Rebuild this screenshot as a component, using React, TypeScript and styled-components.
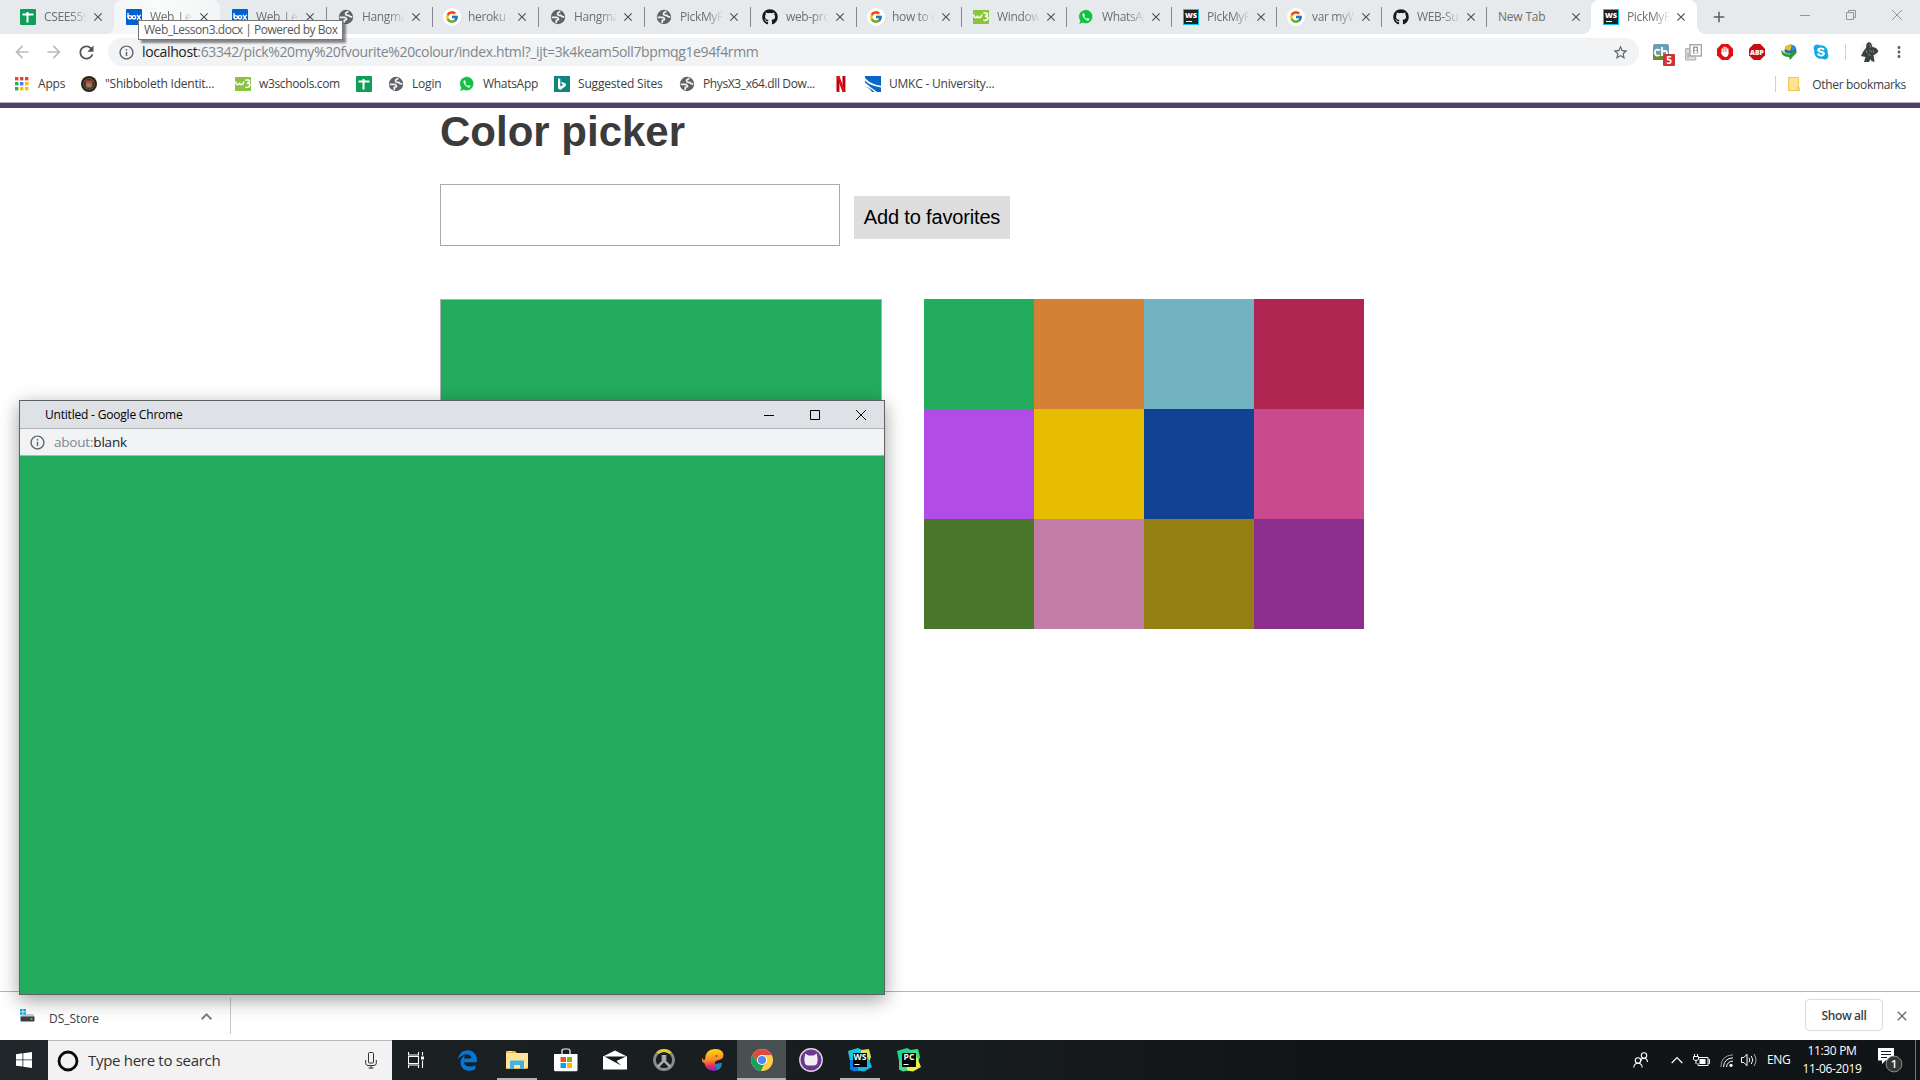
import React from "react";
import styled, { createGlobalStyle, css } from "styled-components";
import {
  MdStarBorder, MdRefresh, MdArrowBack, MdArrowForward, MdMoreVert, MdInfoOutline, MdClose, MdAdd,
} from "react-icons/md";
import { FaGithub, FaSkype, FaEdgeLegacy } from "react-icons/fa6";
import { FcGoogle } from "react-icons/fc";

const GREEN = "#24ac5e";

const Global = createGlobalStyle`
  * { box-sizing: border-box; }
  body { margin: 0; background: #fff; overflow: hidden; }
  svg { display: block; flex: none; }
`;

const Desktop = styled.div`
  position: relative;
  display: flex;
  flex-direction: column;
  width: 1920px;
  height: 1080px;
  overflow: hidden;
  background: #fff;
  font-family: "Open Sans", "Segoe UI", sans-serif;
  font-size: 12px;
  color: #3c4043;
`;

/* ---------- tab strip ---------- */
const TabStrip = styled.div`
  display: flex;
  height: 34px;
  padding-left: 8px;
  background: #e7eaed;
`;
const Tab = styled.div<{ $w: number; $state?: "active" | "hover"; $line?: boolean }>`
  position: relative;
  display: flex;
  align-items: center;
  width: ${(p) => p.$w}px;
  height: 34px;
  padding-left: 12px;
  color: #6b6f73;
  border-radius: 8px 8px 0 0;
  ${(p) => p.$state === "active" && css`background: #fff;`}
  ${(p) => p.$state === "hover" && css`background: linear-gradient(90deg, #f4f5f6, #fafbfb 40%, #f4f5f6);`}
  ${(p) => p.$state && css`
    &::before, &::after {
      content: "";
      position: absolute;
      bottom: 0;
      width: 8px;
      height: 8px;
    }
    &::before { left: -8px; background: radial-gradient(circle at 0 0, transparent 7.5px, ${p.$state === "active" ? "#fff" : "#f4f5f6"} 8px); }
    &::after { right: -8px; background: radial-gradient(circle at 100% 0, transparent 7.5px, ${p.$state === "active" ? "#fff" : "#f4f5f6"} 8px); }
  `}
  ${(p) => p.$line && css`
    &::before {
      content: "";
      position: absolute;
      left: 0;
      top: 7px;
      width: 1px;
      height: 20px;
      background: #85888c;
    }
  `}
`;
const TabTitle = styled.span<{ $plain?: boolean }>`
  flex: none;
  width: ${(p) => (p.$plain ? 66 : 42)}px;
  margin-left: ${(p) => (p.$plain ? 0 : 8)}px;
  overflow: hidden;
  white-space: nowrap;
  letter-spacing: ${(p) => (p.$plain ? -0.2 : -0.35)}px;
  line-height: 20px;
  ${(p) => !p.$plain && css`mask-image: linear-gradient(90deg, #000 62%, transparent 104%);`}
`;
const TabClose = styled.span`
  margin-left: 5px;
  color: #4d5155;
`;
const NewTab = styled.span`
  display: flex;
  align-items: center;
  margin-left: 13px;
  color: #5a5d61;
`;
const WindowButtons = styled.div`
  display: flex;
  align-items: center;
  gap: 36px;
  height: 29px;
  margin-left: auto;
  padding-right: 18px;
`;

/* ---------- toolbar ---------- */
const Toolbar = styled.div`
  display: flex;
  align-items: center;
  height: 36px;
  padding: 0 12px;
  color: #5f6368;
`;
const NavButton = styled.span<{ $dim?: boolean }>`
  width: 32px;
  color: ${(p) => (p.$dim ? "#babcbe" : "#505458")};
`;
const Omnibox = styled.div`
  display: flex;
  align-items: center;
  width: 1531px;
  height: 28px;
  padding: 0 10px;
  border-radius: 14px;
  background: #f1f3f4;
`;
const Url = styled.span`
  flex: 1;
  margin-left: 7px;
  font-size: 14px;
  letter-spacing: -0.37px;
  line-height: 20px;
  color: #80868b;
  b { font-weight: 400; color: #202124; }
`;
const Extensions = styled.div`
  display: flex;
  align-items: center;
  gap: 16px;
  margin-left: 14px;
`;
const ExtensionSlot = styled.div`
  position: relative;
  width: 16px;
  height: 16px;
`;
const Badge = styled.span`
  position: absolute;
  left: 10px;
  top: 10px;
  width: 12px;
  height: 12px;
  border-radius: 1px;
  background: #cf3434;
  color: #fff;
  font-size: 10px;
  font-weight: 700;
  line-height: 12px;
  text-align: center;
`;
const Rule = styled.span<{ $h: number }>`
  width: 1px;
  height: ${(p) => p.$h}px;
  background: #cfd1d3;
`;
const Profile = styled.span`
  margin-left: 13px;
`;
const MenuDots = styled.span`
  margin-left: auto;
`;

/* ---------- bookmarks ---------- */
const Bookmarks = styled.div`
  display: flex;
  align-items: center;
  height: 33px;
  padding: 0 14px 4px 15px;
  border-bottom: 1px solid #b4b4b6;
`;
const Bookmark = styled.div<{ $w?: number; $ls?: number; $gap?: number }>`
  display: flex;
  align-items: center;
  gap: ${(p) => p.$gap ?? 8}px;
  width: ${(p) => (p.$w ? p.$w + "px" : "auto")};
  white-space: nowrap;
  letter-spacing: ${(p) => p.$ls ?? -0.18}px;
  line-height: 20px;
`;
const OtherBookmarks = styled.div`
  display: flex;
  align-items: center;
  gap: 12px;
  margin-left: auto;
  letter-spacing: -0.32px;
  white-space: nowrap;
`;

/* ---------- web page ---------- */
const Page = styled.main`
  flex: 1;
  padding: 0 0 0 440px;
  border-top: 5px solid #4e4066;
  font-family: "Liberation Sans", Arial, sans-serif;
`;
const Title = styled.h1`
  margin: 0;
  font-size: 42px;
  line-height: 48px;
  color: #3b3b3b;
`;
const Form = styled.div`
  display: flex;
  align-items: center;
  gap: 14px;
  margin-top: 28px;
`;
const ColorInput = styled.div`
  width: 400px;
  height: 62px;
  border: 1px solid #a9a9a9;
`;
const AddButton = styled.button`
  width: 156px;
  height: 43px;
  margin: 5px 0 0;
  padding: 0;
  border: 0;
  background: #ddd;
  color: #000;
  font: 20px "Liberation Sans", Arial, sans-serif;
  letter-spacing: -0.16px;
`;
const Boards = styled.div`
  display: flex;
  gap: 42px;
  margin-top: 53px;
`;
const Preview = styled.div`
  width: 442px;
  height: 330px;
  border: 1px solid #b0b0b0;
  background: ${GREEN};
`;
const Palette = styled.div`
  display: grid;
  grid-template-columns: repeat(4, 110px);
  grid-auto-rows: 110px;
`;
const Swatch = styled.div<{ $c: string }>`
  background: ${(p) => p.$c};
`;

/* ---------- download shelf ---------- */
const Shelf = styled.div`
  display: flex;
  align-items: center;
  height: 49px;
  padding: 0 10px 0 19px;
  border-top: 1px solid #b4b4b6;
  background: #fff;
`;
const Download = styled.div`
  display: flex;
  align-items: center;
  width: 212px;
  height: 36px;
  padding-right: 18px;
  border-right: 1px solid #c6c8ca;
  span { flex: 1; margin-left: 14px; padding-top: 4px; letter-spacing: -0.05px; }
`;
const ShowAll = styled.button`
  width: 78px;
  height: 32px;
  margin: 0 11px 2px auto;
  padding: 0;
  border: 1px solid #dadce0;
  border-radius: 4px;
  background: #fff;
  color: #3c4043;
  font: 600 12px "Open Sans", sans-serif;
  letter-spacing: -0.4px;
`;
const ShelfClose = styled.span`
  margin-bottom: 1px;
  color: #6b6e71;
`;

/* ---------- taskbar ---------- */
const Taskbar = styled.div`
  display: flex;
  height: 40px;
  background: linear-gradient(90deg, #20262a 0, #1a1f22 25%, #171c1f 50%, #111416 70%, #111518 100%);
  color: #fff;
`;
const Start = styled.div`
  display: flex;
  align-items: center;
  justify-content: center;
  width: 48px;
`;
const Search = styled.div`
  display: flex;
  align-items: center;
  width: 344px;
  padding: 0 15px 0 9px;
  border-top: 1px solid #b8b8b8;
  background: #f2f2f2;
  color: #303030;
  font-size: 15px;
  span { flex: 1; margin-left: 9px; padding-bottom: 1px; letter-spacing: -0.3px; }
`;
const TaskView = styled.div`
  display: flex;
  align-items: center;
  justify-content: center;
  width: 51px;
  padding-right: 3px;
`;
const TaskButton = styled.div<{ $on?: boolean; $run?: boolean }>`
  display: flex;
  align-items: center;
  justify-content: center;
  width: 49px;
  height: 40px;
  ${(p) => p.$on && css`background-color: #4a4f52;`}
  ${(p) => p.$run && css`
    background-image: linear-gradient(#b5b1b5, #b5b1b5);
    background-repeat: no-repeat;
    background-position: center bottom;
    background-size: ${p.$on ? 49 : 40}px 2px;
  `}
`;
const Tray = styled.div`
  display: flex;
  align-items: center;
  width: 287px;
  margin-left: auto;
`;
const TrayIcon = styled.span<{ $gap: number }>`
  margin-left: ${(p) => p.$gap}px;
`;
const Lang = styled.span`
  width: 26px;
  margin-left: 9px;
  padding-bottom: 1px;
  letter-spacing: -0.4px;
`;
const Clock = styled.div`
  width: 62px;
  margin-left: 8px;
  text-align: center;
  line-height: 18px;
  letter-spacing: -0.35px;
  white-space: nowrap;
`;
const PeekEdge = styled.span`
  width: 1px;
  height: 40px;
  margin: 0 4px 0 auto;
  background: #777a7c;
`;

/* ---------- floating pieces ---------- */
const Tooltip = styled.div`
  position: absolute;
  left: 138px;
  top: 20px;
  width: 205px;
  height: 20px;
  padding-left: 5px;
  border: 1px solid #767676;
  background: #fff;
  box-shadow: 3px 3px 2px rgba(0, 0, 0, 0.45);
  color: #575757;
  line-height: 18px;
  letter-spacing: -0.47px;
  white-space: nowrap;
`;
const Popup = styled.section`
  position: absolute;
  left: 19px;
  top: 400px;
  display: flex;
  flex-direction: column;
  width: 866px;
  height: 595px;
  border: 1px solid #5e6263;
  background: ${GREEN};
  box-shadow: 0 5px 18px rgba(0, 0, 0, 0.38);
`;
const PopupTitle = styled.div`
  display: flex;
  align-items: center;
  height: 28px;
  padding: 0 18px 0 25px;
  border-bottom: 1px solid #b0b3b6;
  background: #dee1e6;
  color: #000;
  letter-spacing: -0.2px;
`;
const PopupButtons = styled.div`
  display: flex;
  gap: 36px;
  margin-left: auto;
`;
const PopupAddress = styled.div`
  display: flex;
  align-items: center;
  gap: 8px;
  height: 27px;
  padding-left: 9px;
  border-bottom: 1px solid #b0b3b6;
  background: #f1f3f4;
  color: #80868b;
  font-size: 13.5px;
  letter-spacing: -0.2px;
  b { font-weight: 400; color: #202124; }
  svg { color: #5f6368; }
`;

/* ---------- icons ---------- */
const GlobeIcon = () => (
  <svg width="16" height="16" viewBox="0 0 16 16"><circle cx="8" cy="8" r="7.200" fill="#5f6368" /><g fill="none" stroke="#f1f2f3" strokeWidth="1.700"><path d="M10.300 2.300 7.700 4.100q-.7 1.900 1.400 2.200h1.700q.8 1.900 3.500 1.500" /><path d="M1.700 8.400h4.500q2.400.1 2.300 2.200l-2.200.7v2.700" /></g></svg>
);
const SheetIcon = () => (
  <svg width="16" height="16" viewBox="0 0 16 16"><rect width="16" height="16" rx="1" fill="#0f9d58" /><path d="M2.500 5.500h11M7.500 3v10.500" stroke="#fff" strokeWidth="2" /></svg>
);
const BoxIcon = () => (
  <svg width="16" height="16" viewBox="0 0 16 16"><rect width="16" height="16" rx="1" fill="#0061d5" /><g fill="none" stroke="#fff" strokeWidth="1.4"><path d="M2 4.500v4M11.300 6.300l3 4M14.300 6.300l-3 4" strokeLinecap="round" /><circle cx="3.800" cy="8.300" r="1.700" /><circle cx="8" cy="8.300" r="1.700" /></g></svg>
);
const W3Icon = () => (
  <svg width="16" height="16" viewBox="0 0 16 16"><rect y="1" width="16" height="14" fill="#8ac43f" /><path d="M.8 5.500c0 4 3.300 4 3.700 1 .3 3 3.800 3 4.300-1M10.300 4.200q4-.9 4.200 1 0 1.800-2.500 2 3.300.2 2.800 2.600-.8 2.300-4.500 1.300" fill="none" stroke="#fff" strokeWidth="1.500" /></svg>
);
const RoundBack = styled.span`
  display: flex;
  align-items: center;
  justify-content: center;
  width: 16px;
  height: 16px;
  border-radius: 50%;
  background: #fff;
  box-shadow: 0 0 0 1px #fff;
`;
const GoogleIcon = () => <RoundBack><FcGoogle size={14} /></RoundBack>;
const WhatsIcon = () => (
  <svg width="16" height="16" viewBox="0 0 16 16"><path d="M.8 15.300 2 11.700A7 7 0 1 1 4.800 14Z" fill="#12c143" stroke="#fff" strokeWidth=".5" /><path d="M5 4.200q-1.300 1.300 0 3.500 1.700 3 4.600 4 1.400.1 2-1.600L9.700 9l-.9 1Q7 9.300 6.200 7.500l.7-1-.8-2Z" fill="#fff" /></svg>
);
const WsGlyph = () => (
  <svg width="16" height="16" viewBox="0 0 16 16"><rect width="16" height="16" fill="#07c3f2" /><rect x="1" y="1" width="14" height="14" fill="#222" /><text x="8" y="8.600" textAnchor="middle" fontFamily="Open Sans, sans-serif" fontWeight="800" fontSize="7.500" fill="#fff">WS</text><path d="M3 12.500h6" stroke="#fff" /></svg>
);
const AppsIcon = () => {
  const colors = ["#e94235", "#e94235", "#e94235", "#34a853", "#4285f4", "#fbbc05", "#34a853", "#fbbc05", "#fbbc05"];
  return (
    <svg width="14" height="14" viewBox="0 0 14 14">
      {colors.map((c, i) => <rect key={i} x={(i % 3) * 5} y={Math.floor(i / 3) * 5} width="3.400" height="3.400" fill={c} />)}
    </svg>
  );
};
const ShieldCrest = () => (
  <svg width="16" height="16" viewBox="0 0 16 16"><circle cx="8" cy="8" r="8" fill="#2a2119" /><circle cx="8" cy="8" r="6" fill="#6a5638" /><circle cx="8" cy="8" r="5" fill="#3b3021" /><path d="M4 4.500h8l-1 2.500H5Z" fill="#b8443c" /><path d="M4.500 8h7l-1 3.500h-5Z" fill="#8e7f66" /><path d="M5 7.500h6" stroke="#6178a0" /></svg>
);
const BingIcon = () => (
  <svg width="16" height="16" viewBox="0 0 16 16"><rect width="16" height="16" fill="#10857f" /><path d="m4 2 2.300.9v7.500l3-1.700-1.500-.7-1-2.300 5 1.800v2.600L6.300 14 4 12.600Z" fill="#fff" /></svg>
);
const NetflixIcon = () => (
  <svg width="16" height="16" viewBox="0 0 16 16"><path d="M3.500 0H6.400V16L3.500 15.700ZM9.500 0h2.900v16l-2.900-.3Z" fill="#b1060f" /><path d="M3.500 0h2.900l6 16H9.500Z" fill="#e50914" /></svg>
);
const UmkcIcon = () => (
  <svg width="16" height="16" viewBox="0 0 16 16"><rect width="16" height="16" fill="#0766c8" /><path d="M0 2q5 6 16 7.800v1.600Q4 9.500 0 4.500ZM0 6.500Q5 11 12 16H9.500Q6 12 0 10.500Z" fill="#fff" /><path d="M0 10.500Q5 12 7 16H0Z" fill="#fff" /></svg>
);
const CbIcon = () => (
  <svg width="16" height="16" viewBox="0 0 16 16"><rect width="16" height="16" rx="2" fill="#6b9fb0" /><path d="M0 11q8-3 16 0v5H0Z" fill="#688b36" /><path d="M7 6.300Q2 4 2 8.500T7 11M9 3v9M9 7.500q5-2 5 1.500T9 11" fill="none" stroke="#fff" strokeWidth="1.800" /></svg>
);
const CardsIcon = () => (
  <svg width="17" height="17" viewBox="0 0 17 17"><path d="M4 4.500H.7V16h10v-3" fill="#ddd" stroke="#aaa" /><rect x="5" y=".7" width="11.300" height="11.300" fill="#fff" stroke="#999" strokeWidth="1.200" /><path d="M8 2.500h5v7H8z" fill="#9b9b9b" /><circle cx="10.600" cy="5" r="1.200" fill="#fff" /><path d="M9 9q0-2.500 1.600-2.500T12.200 9Z" fill="#fff" /><path d="M3 14V9" stroke="#999" /></svg>
);
const StopHand = () => (
  <svg width="16" height="16" viewBox="0 0 16 16"><path d="M4.700 0h6.600L16 4.700v6.600L11.300 16H4.700L0 11.300V4.700Z" fill="#e40d0d" /><path d="M5.200 9V5M7.100 8V3.200M9 8V3.500M10.800 9V5" stroke="#fff" strokeWidth="1.400" strokeLinecap="round" /><path d="M4.500 8h7v2q-.5 3-3.200 3.200Q6 13 4.500 10Z" fill="#fff" /></svg>
);
const AbpIcon = () => (
  <svg width="16" height="16" viewBox="0 0 16 16"><path d="M4.700 0h6.600L16 4.700v6.600L11.300 16H4.700L0 11.300V4.700Z" fill="#c70d12" /><text x="8" y="10.500" textAnchor="middle" fontFamily="Open Sans, sans-serif" fontWeight="800" fontSize="6.800" fill="#fff">ABP</text></svg>
);
const IdmIcon = () => (
  <svg width="17" height="16" viewBox="0 0 17 16"><circle cx="9.500" cy="6.500" r="6" fill="#276bb9" /><path d="M3.500 5q2-5 8-4.300L9 7Z" fill="#efbf28" /><path d="M10 1q4 0 5 4l-4 2Z" fill="#2f8be0" /><path d="M.5 5.500q2 5 8 5l3-3.500 4.500 1-7 8-1-3Q2 13 .5 9Z" fill="#279a30" /><path d="M2 6.500q3 4 7.500 3.500" fill="none" stroke="#9fe05d" strokeWidth="1.200" /></svg>
);
const SkypeIcon = () => (
  <svg width="16" height="16" viewBox="0 0 16 16"><circle cx="8" cy="8" r="5" fill="#fff" /><svg x="-.5" y="-.5" width="17" height="17" viewBox="0 0 17 17"><FaSkype size={17} color="#14a7e8" /></svg></svg>
);
const Soldier = () => (
  <svg width="20" height="20" viewBox="0 0 20 20"><circle cx="10" cy="10" r="9.500" fill="#f5f6f6" /><path d="m9.500 0 2.500 1 1.500 4 3.500 1 2.500 3-2.500 3-2.500 1 1 7-3-1-1-2-1.500 3H5l1.500-5L2 14l2.500-5L7 6 7.500 2Z" fill="#3a403b" /><path d="m10 2 2 2-1 2M10 8l3 2M9 12l3 2M7 8l1 3M14 8l1 3" fill="none" stroke="#7c8279" /></svg>
);
const FolderNote = () => (
  <svg width="12" height="14" viewBox="0 0 12 14"><path d="M.5.5h10v9l1 1v3H.5Z" fill="#ffe591" stroke="#ecc94f" /><path d="M9.500 13V9.500" stroke="#ecc94f" /></svg>
);
const DriveIcon = () => (
  <svg width="16" height="14" viewBox="0 0 16 14"><path d="M1 0h2.600v2.600H1ZM4.300 0h2.600v2.600H4.300ZM1 3.300h2.600v2.500H1ZM4.300 3.300h2.600v2.500H4.300Z" fill="#0ba7e4" /><path d="M7 5h7l2 3H1l1-2h5Z" fill="#c7cbd0" /><rect x="1.500" y="7.500" width="14" height="5" rx="1" fill="#3a3f42" /><circle cx="12.500" cy="10" r="1" fill="#45e04b" /></svg>
);
const Minus = ({ color }: { color: string }) => <svg width="10" height="10" viewBox="0 0 10 10"><path d="M0 5.500h10" stroke={color} /></svg>;
const Square = () => <svg width="10" height="10" viewBox="0 0 10 10"><path d="M.5.5h9v9h-9Z" fill="none" stroke="#000" /></svg>;
const Restore = () => <svg width="10" height="10" viewBox="0 0 10 10"><path d="M.5 2.500h7v7h-7ZM2.500 2.500v-2h7v7h-2" fill="none" stroke="#929597" /></svg>;
const Cross = ({ color }: { color: string }) => <svg width="10" height="10" viewBox="0 0 10 10"><path d="m0 0 10 10M10 0 0 10" stroke={color} /></svg>;
const WindowsLogo = () => (
  <svg width="16" height="16" viewBox="0 0 16 16"><path d="M0 2.200 6.500 1.300v6.200H0ZM7.300 1.200 16 0v7.500H7.300ZM0 8.300h6.500v6.300L0 13.700ZM7.300 8.300H16V16l-8.700-1.200Z" fill="#fff" /></svg>
);
const Mic = () => (
  <svg width="12" height="17" viewBox="0 0 12 17"><rect x="3.500" y=".5" width="5" height="10.500" rx="1" fill="none" stroke="#333" /><path d="M.7 8v3.200q.3 2.300 2.300 2.300h6q2 0 2.300-2.300V8M6 13.500v3M3.500 16h5" fill="none" stroke="#333" /></svg>
);
const TaskViewIcon = () => (
  <svg width="16" height="16" viewBox="0 0 16 16"><path d="M.5 0v3h10V0M.5 16v-3h10v3M.5 4.500h10v7H.5ZM14.500 0v3.500M14.500 8.500V16" fill="none" stroke="#fff" strokeWidth="1.100" /><rect x="13" y="4.500" width="3" height="3" fill="#fff" /></svg>
);
const ExplorerIcon = () => (
  <svg width="22" height="20" viewBox="0 0 22 20"><path d="M0 1h9l2 2h10.500v16H0Z" fill="#e9b64c" /><path d="M0 3h22v15H0Z" fill="#ffe597" /><path d="M2 1.500h4" stroke="#fff3c0" /><path d="M4 19v-7.500q0-1 1-1h12q1 0 1 1V19h-4v-4H8v4Z" fill="#42b1e8" /></svg>
);
const StoreIcon = () => (
  <svg width="24" height="24" viewBox="0 0 24 24"><path d="M8 6V3q0-2 2-2h4q2 0 2 2v3" fill="none" stroke="#fff" strokeWidth="1.200" /><path d="M0 6h23.500v16q0 1.300-1.300 1.300H1.500Q0 23.300 0 22Z" fill="#fff" /><path d="M6.500 9H12v5H6.500Z" fill="#f25022" /><path d="M13 9h5v5h-5Z" fill="#7fba00" /><path d="M6.500 15H12v5H6.500Z" fill="#00a4ef" /><path d="M13 15h5v5h-5Z" fill="#ffb900" /></svg>
);
const MailIcon = () => (
  <svg width="24" height="20" viewBox="0 0 24 20"><path d="M0 6.500 12 .5l12 6V19.500H0Z" fill="#fff" /><path d="M1.500 6.500H23L13.500 11l4.500 4.500Z" fill="#181c1e" /></svg>
);
const OverwatchIcon = () => (
  <svg width="24" height="24" viewBox="0 0 24 24"><circle cx="12" cy="12" r="9.500" fill="none" stroke="#888c90" strokeWidth="2.800" /><path d="M5.500 5a9.500 9.500 0 0 1 13 0" fill="none" stroke="#e9cf2a" strokeWidth="3" /><path d="M11 7v6.500l-5.500 5.500M13 7v6.500l5.500 5.500" fill="none" stroke="#a8abad" strokeWidth="2.600" /></svg>
);
const DinoIcon = () => (
  <svg width="24" height="24" viewBox="0 0 24 24"><defs><linearGradient id="dino" x1=".4" y1="0" x2=".5" y2="1"><stop offset="0" stopColor="#ffd91c" /><stop offset=".5" stopColor="#fb8b24" /><stop offset=".75" stopColor="#ed2a65" /><stop offset="1" stopColor="#7527bd" /></linearGradient></defs><path d="M1.500 9.500Q2 13 4 11.500 4 2 13 1q8.500-.5 9.500 5.500 0 4.500-4.500 5.500-4 .5-4 3t2 3q2 0 3-1 0 5-6 6Q5 22.500 3.500 15.500 0 14 1.500 9.500Z" fill="url(#dino)" /><path d="M13 17q3-2.500 8-2-.2 6-5.500 7.500-.5-1.500 1-3-3 0-3.500-2.500Z" fill="#1589be" /><circle cx="15.500" cy="8" r=".8" fill="#302311" /></svg>
);
const ChromeIcon = () => (
  <svg width="22" height="22" viewBox="0 0 22 22"><circle cx="11" cy="11" r="11" fill="#ffcd42" /><path d="M1.500 5.500A11 11 0 0 1 20.600 6H11L6.700 13.500Z" fill="#dd4b3e" /><path d="M1.500 5.500 6.700 13.500l7 .5-3.800 8A11 11 0 0 1 1.500 5.500Z" fill="#1ba05c" /><circle cx="11" cy="11" r="5.100" fill="#fff" /><circle cx="11" cy="11" r="4.100" fill="#4b8bf5" /></svg>
);
const GitDesktopIcon = () => (
  <svg width="24" height="24" viewBox="0 0 24 24"><circle cx="12" cy="12" r="11.200" fill="#6c3590" stroke="#ded4e5" strokeWidth="1.400" /><path d="M6.200 5.500 9.500 7.500h5l3.300-2 .8 5q.6 6.500-3.600 7H9q-4.200-.5-3.600-7Z" fill="#f1edf3" /></svg>
);
const JetBrainsIcon = ({ label, colors }: { label: string; colors: [string, string, string, string] }) => (
  <svg width="24" height="24" viewBox="0 0 24 24"><path d="m0 3 10-3 6 3-3 12-10 3Z" fill={colors[0]} /><path d="m13 2 8-1 2 8-3 8h-8Z" fill={colors[1]} /><path d="M2 12h12v10l-8 1.500-4-2Z" fill={colors[2]} /><path d="M10 16 20 9l4 10-8 4.500-6-1Z" fill={colors[3]} /><rect x="5" y="5" width="14" height="14" fill="#050505" /><text x="12" y="12" textAnchor="middle" fontFamily="Open Sans, sans-serif" fontWeight="700" fontSize="8.500" fill="#fff">{label}</text><path d="M6.500 16.500h5" stroke="#fff" /></svg>
);
const PeopleIcon = () => (
  <svg width="16" height="16" viewBox="0 0 16 16" fill="none" stroke="#fff" strokeWidth="1.100"><circle cx="11" cy="3.500" r="2.700" /><path d="M7.800 9q0-2.700 3.200-2.700T14.500 10" /><circle cx="5" cy="8.500" r="2.700" /><path d="M.8 15.500Q1 11.300 5 11.300t4.200 4.200" /></svg>
);
const ChevronUp = ({ color, size = 12, w = 1.2 }: { color: string; size?: number; w?: number }) => (
  <svg width={size} height={size} viewBox="0 0 12 12"><path d="m.7 9 5.300-5.300L11.300 9" fill="none" stroke={color} strokeWidth={w} /></svg>
);
const BatteryIcon = () => (
  <svg width="17" height="13" viewBox="0 0 17 13"><path d="M6 3.500h9v8H5V9M15.500 5.500h1v4h-1" fill="none" stroke="#fff" /><rect x="6.500" y="5" width="6" height="5" fill="#fff" /><path d="M1.500 0v2.500M4.500 0v2.500M.5 2.500h5V5q-.5 1.500-2.500 1.500T.5 5ZM3 6v4" fill="none" stroke="#fff" /></svg>
);
const WifiIcon = () => (
  <svg width="13" height="13" viewBox="0 0 13 13" fill="none"><path d="M.8 13Q1 1.500 13 .8" stroke="#999c9e" /><path d="M3.500 13Q4 4.500 13 3.800M6.500 13Q7 7.500 13 7" stroke="#fff" /><circle cx="11" cy="11.300" r="1.600" fill="#fff" /></svg>
);
const SpeakerIcon = () => (
  <svg width="17" height="14" viewBox="0 0 17 14" fill="none" stroke="#fff"><path d="M.5 4.500h2.300L6 1.200v11.600L2.800 9.500H.5ZM8 4.800q1.500 2.200 0 4.400M10.300 3q3 4 0 8" /><path d="M13 1q4 6 0 12" stroke="#aaa" /></svg>
);
const NotesIcon = () => (
  <svg width="25" height="26" viewBox="0 0 25 26"><path d="M0 1h16v12.500H7.500L4 17v-3.500H0Z" fill="#fff" /><path d="M3 4.500h10M3 7.500h10M3 10.500h6" stroke="#15191b" /><circle cx="16" cy="17" r="7.900" fill="#333637" stroke="#8a8d8e" /><text x="16" y="21" textAnchor="middle" fontFamily="Open Sans, sans-serif" fontWeight="600" fontSize="11.500" fill="#fff">1</text></svg>
);

/* ---------- data ---------- */
type TabInfo = { title: string; icon?: React.ReactNode; w: number; state?: "active" | "hover"; line?: boolean };
const tabs: TabInfo[] = [
  { title: "CSEE5590", icon: <SheetIcon />, w: 106 },
  { title: "Web_Lesson3", icon: <BoxIcon />, w: 106, state: "hover" },
  { title: "Web_Lesson3", icon: <BoxIcon />, w: 106 },
  { title: "Hangman", icon: <GlobeIcon />, w: 106, line: true },
  { title: "heroku app", icon: <GoogleIcon />, w: 106, line: true },
  { title: "Hangman", icon: <GlobeIcon />, w: 106, line: true },
  { title: "PickMyFav", icon: <GlobeIcon />, w: 106, line: true },
  { title: "web-progr", icon: <FaGithub size={16} color="#191717" />, w: 106, line: true },
  { title: "how to cr", icon: <GoogleIcon />, w: 105, line: true },
  { title: "Window o", icon: <W3Icon />, w: 105, line: true },
  { title: "WhatsApp", icon: <WhatsIcon />, w: 105, line: true },
  { title: "PickMyFav", icon: <WsGlyph />, w: 105, line: true },
  { title: "var myWin", icon: <GoogleIcon />, w: 105, line: true },
  { title: "WEB-Sum", icon: <FaGithub size={16} color="#191717" />, w: 105, line: true },
  { title: "New Tab", w: 105, line: true },
  { title: "PickMyFav", icon: <WsGlyph />, w: 106, state: "active" },
];

const bookmarks = [
  { label: "Apps", icon: <AppsIcon />, w: 66, gap: 9 },
  { label: "\"Shibboleth Identit...", icon: <ShieldCrest />, w: 154, ls: -0.22 },
  { label: "w3schools.com", icon: <W3Icon />, w: 121, ls: -0.35 },
  { label: "", icon: <SheetIcon />, w: 32 },
  { label: "Login", icon: <GlobeIcon />, w: 71 },
  { label: "WhatsApp", icon: <WhatsIcon />, w: 95, ls: -0.3 },
  { label: "Suggested Sites", icon: <BingIcon />, w: 125 },
  { label: "PhysX3_x64.dll Dow...", icon: <GlobeIcon />, w: 154, ls: -0.38 },
  { label: "", icon: <NetflixIcon />, w: 32 },
  { label: "UMKC - University...", icon: <UmkcIcon />, w: 140, ls: -0.22 },
];

const swatches = [
  "#24ac5e", "#d48136", "#71b3c1", "#ae2651",
  "#b14ce7", "#e6bd00", "#114293", "#ca4a90",
  "#4a762c", "#c17da6", "#947f12", "#8b2e8c",
];

export default function App() {
  return (
    <Desktop>
      <Global />
      <TabStrip>
        {tabs.map((t, i) => (
          <Tab key={i} $w={t.w} $state={t.state} $line={t.line}>
            {t.icon}
            <TabTitle $plain={!t.icon}>{t.title}</TabTitle>
            <TabClose><MdClose size={14} /></TabClose>
          </Tab>
        ))}
        <NewTab><MdAdd size={18} /></NewTab>
        <WindowButtons><Minus color="#929597" /><Restore /><Cross color="#929597" /></WindowButtons>
      </TabStrip>

      <Toolbar>
        <NavButton $dim><MdArrowBack size={20} /></NavButton>
        <NavButton $dim><MdArrowForward size={20} /></NavButton>
        <NavButton><MdRefresh size={21} /></NavButton>
        <Omnibox>
          <MdInfoOutline size={17} />
          <Url><b>localhost</b>:63342/pick%20my%20fvourite%20colour/index.html?_ijt=3k4keam5oll7bpmqg1e94f4rmm</Url>
          <MdStarBorder size={17} />
        </Omnibox>
        <Extensions>
          <ExtensionSlot><CbIcon /><Badge>5</Badge></ExtensionSlot>
          <ExtensionSlot><CardsIcon /></ExtensionSlot>
          <StopHand />
          <AbpIcon />
          <ExtensionSlot><IdmIcon /></ExtensionSlot>
          <SkypeIcon />
          <Rule $h={16} />
        </Extensions>
        <Profile><Soldier /></Profile>
        <MenuDots><MdMoreVert size={18} /></MenuDots>
      </Toolbar>

      <Bookmarks>
        {bookmarks.map((b, i) => (
          <Bookmark key={i} $w={b.w} $ls={b.ls} $gap={b.gap}>{b.icon}{b.label}</Bookmark>
        ))}
        <OtherBookmarks>
          <Rule $h={16} />
          <FolderNote />
          Other bookmarks
        </OtherBookmarks>
      </Bookmarks>

      <Page>
        <Title>Color picker</Title>
        <Form>
          <ColorInput />
          <AddButton>Add to favorites</AddButton>
        </Form>
        <Boards>
          <Preview />
          <Palette>{swatches.map((c) => <Swatch key={c} $c={c} />)}</Palette>
        </Boards>
      </Page>

      <Shelf>
        <Download>
          <DriveIcon />
          <span>DS_Store</span>
          <ChevronUp color="#77797c" size={11} w={2} />
        </Download>
        <ShowAll>Show all</ShowAll>
        <ShelfClose><MdClose size={16} /></ShelfClose>
      </Shelf>

      <Taskbar>
        <Start><WindowsLogo /></Start>
        <Search>
          <svg width="22" height="22" viewBox="0 0 22 22"><circle cx="11" cy="11" r="9" fill="none" stroke="#0a0a0a" strokeWidth="2.800" /></svg>
          <span>Type here to search</span>
          <Mic />
        </Search>
        <TaskView><TaskViewIcon /></TaskView>
        <TaskButton><FaEdgeLegacy size={21} color="#0078d7" /></TaskButton>
        <TaskButton $run><ExplorerIcon /></TaskButton>
        <TaskButton><StoreIcon /></TaskButton>
        <TaskButton><MailIcon /></TaskButton>
        <TaskButton><OverwatchIcon /></TaskButton>
        <TaskButton><DinoIcon /></TaskButton>
        <TaskButton $run $on><ChromeIcon /></TaskButton>
        <TaskButton><GitDesktopIcon /></TaskButton>
        <TaskButton $run><JetBrainsIcon label="WS" colors={["#19c6e0", "#d9e650", "#0b79e3", "#12b9e6"]} /></TaskButton>
        <TaskButton><JetBrainsIcon label="PC" colors={["#21d789", "#3fdc84", "#3fdc84", "#e9ee4a"]} /></TaskButton>
        <Tray>
          <TrayIcon $gap={0}><PeopleIcon /></TrayIcon>
          <TrayIcon $gap={22}><ChevronUp color="#fff" /></TrayIcon>
          <TrayIcon $gap={10}><BatteryIcon /></TrayIcon>
          <TrayIcon $gap={10}><WifiIcon /></TrayIcon>
          <TrayIcon $gap={8}><SpeakerIcon /></TrayIcon>
          <Lang>ENG</Lang>
          <Clock>11:30 PM<br />11-06-2019</Clock>
          <TrayIcon $gap={15}><NotesIcon /></TrayIcon>
          <PeekEdge />
        </Tray>
      </Taskbar>

      <Tooltip>Web_Lesson3.docx | Powered by Box</Tooltip>

      <Popup>
        <PopupTitle>
          Untitled - Google Chrome
          <PopupButtons><Minus color="#000" /><Square /><Cross color="#000" /></PopupButtons>
        </PopupTitle>
        <PopupAddress>
          <MdInfoOutline size={17} />
          <span>about:<b>blank</b></span>
        </PopupAddress>
      </Popup>
    </Desktop>
  );
}
